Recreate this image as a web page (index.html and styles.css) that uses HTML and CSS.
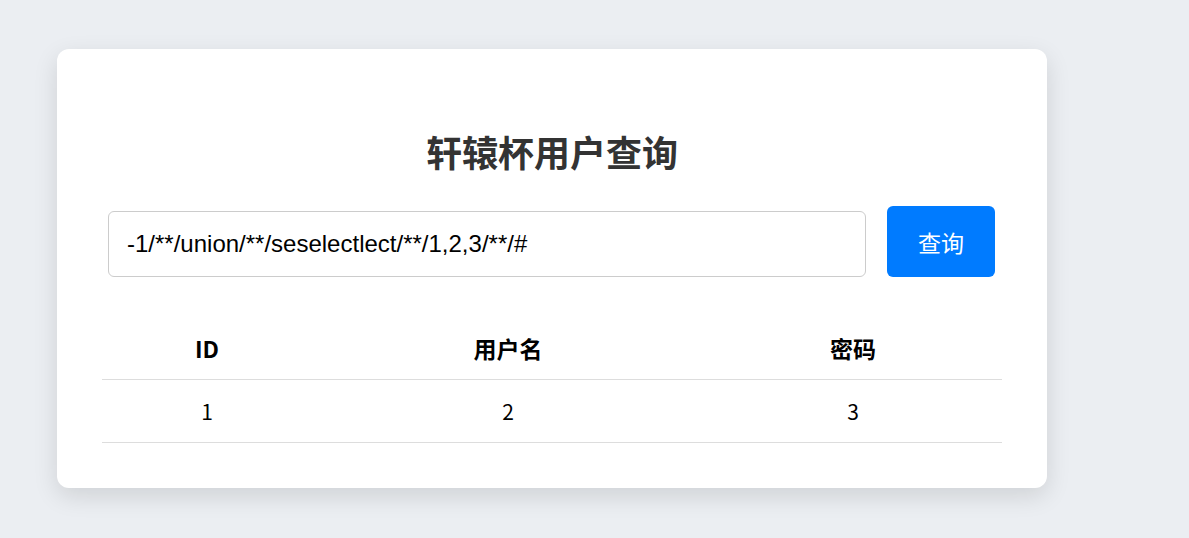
FILE: index.html
```html
<!DOCTYPE html>
<html lang="zh">
<head>
<meta charset="utf-8">
<title>轩辕杯用户查询</title>
<link rel="stylesheet" href="styles.css">
</head>
<body>
<div class="page">
  <div class="card">
    <h2 class="title">轩辕杯用户查询</h2>
    <form class="search" onsubmit="return false">
      <input class="search-input" type="text" value="-1/**/union/**/seselectlect/**/1,2,3/**/#">
      <button class="search-btn" type="submit">查询</button>
    </form>
    <table class="result">
      <colgroup>
        <col class="c1"><col class="c2"><col class="c3">
      </colgroup>
      <thead>
        <tr><th>ID</th><th>用户名</th><th>密码</th></tr>
      </thead>
      <tbody>
        <tr><td>1</td><td>2</td><td>3</td></tr>
      </tbody>
    </table>
  </div>
</div>
</body>
</html>
```

FILE: styles.css
```css
html, body {
  margin: 0;
  padding: 0;
  background: #ebeef2;
  font-family: "Noto Sans CJK SC", "Noto Sans", sans-serif;
}

.page {
  box-sizing: border-box;
  min-height: 538px;
  padding: 49px 0 49px 57px;
}

.card {
  box-sizing: border-box;
  width: 990px;
  padding: 45px;
  background: #fff;
  border-radius: 12px;
  box-shadow: 0 8px 24px rgba(0, 0, 0, 0.12);
}

.title {
  margin: 36px 0 0;
  font-size: 36px;
  line-height: 43px;
  font-weight: 700;
  color: #333;
  text-align: center;
}

.search {
  display: flex;
  align-items: flex-end;
  gap: 21px;
  margin-top: 33px;
  padding: 0 7px 0 6px;
}

.search-input {
  flex: 1;
  box-sizing: border-box;
  height: 66px;
  padding: 0 18px;
  border: 1px solid #ccc;
  border-radius: 6px;
  font-family: "Liberation Sans", Arial, sans-serif;
  font-size: 24px;
  color: #000;
  outline: none;
}

.search-btn {
  box-sizing: border-box;
  width: 108px;
  height: 71px;
  border: none;
  border-radius: 6px;
  background: #007bff;
  color: #fff;
  font-family: "Noto Sans CJK SC", sans-serif;
  font-size: 23px;
  cursor: pointer;
}

.result {
  width: 100%;
  margin-top: 41px;
  border-collapse: collapse;
  table-layout: fixed;
}

.c1 { width: 210px; }
.c2 { width: 392px; }
.c3 { width: 298px; }

.result th,
.result td {
  line-height: 23px;
  font-size: 21px;
  text-align: center;
  color: #000;
  border-bottom: 1px solid #ddd;
}

.result th {
  padding: 19px 0;
  font-size: 23px;
  font-weight: 700;
}

.result td {
  padding: 20px 0 19px;
  font-weight: 400;
}
```
